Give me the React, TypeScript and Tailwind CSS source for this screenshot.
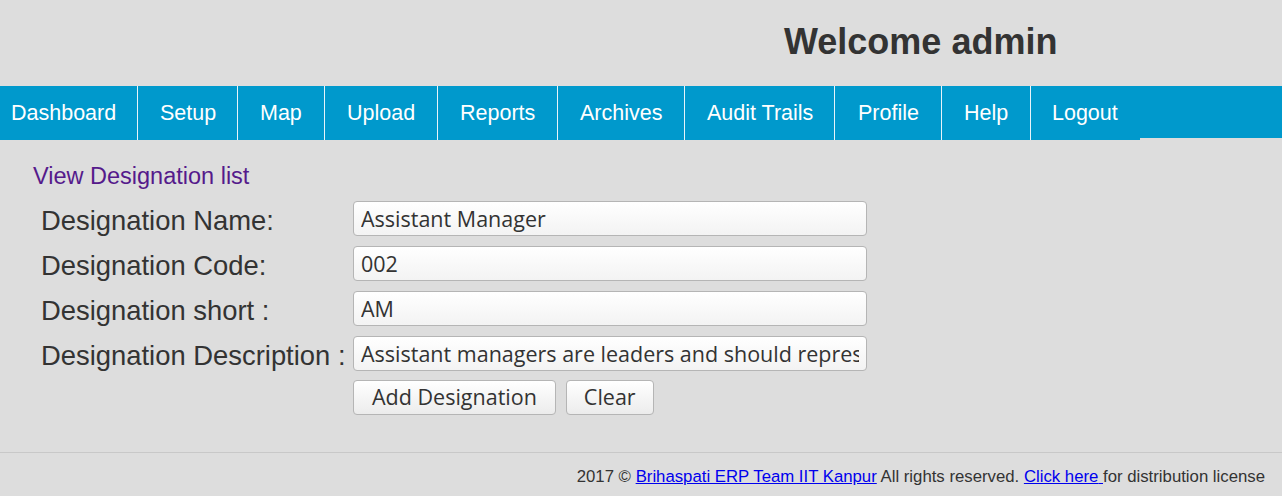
const navItems = [
  { label: "Dashboard", w: "w-[138px] pl-[11px]" },
  { label: "Setup", w: "w-[100px] pl-[22px]" },
  { label: "Map", w: "w-[87px] pl-[22px]" },
  { label: "Upload", w: "w-[113px] pl-[22px]" },
  { label: "Reports", w: "w-[120px] pl-[22px]" },
  { label: "Archives", w: "w-[127px] pl-[22px]" },
  { label: "Audit Trails", w: "w-[150px] pl-[22px]" },
  { label: "Profile", w: "w-[107px] pl-[23px]" },
  { label: "Help", w: "w-[89px] pl-[22px]" },
  { label: "Logout", w: "w-[109px] pl-[21px] border-r-0" },
];

const fields = [
  { label: "Designation Name:", value: "Assistant Manager" },
  { label: "Designation Code:", value: "002" },
  { label: "Designation short :", value: "AM" },
  {
    label: "Designation Description :",
    value: "Assistant managers are leaders and should represent the company",
  },
];

export default function App() {
  return (
    <div className="min-h-[496px] w-[1282px] bg-[#dddddd] font-['Liberation_Sans',Arial,sans-serif] text-[#333333] flex flex-col">
      {/* header */}
      <div className="h-[86px] flex items-center pl-[784px]">
        <h1 className="text-[36px] font-bold leading-none pb-[2px]">Welcome admin</h1>
      </div>

      {/* menu */}
      <div className="h-[52px] bg-[#0099cc] flex items-start">
        {navItems.map((item) => (
          <div
            key={item.label}
            className={`h-[54px] shrink-0 bg-[#0099cc] flex items-center text-white text-[21.5px] whitespace-nowrap border-r border-[#e8f4fa] ${item.w}`}
          >
            {item.label}
          </div>
        ))}
      </div>

      {/* content */}
      <div className="flex-1 pt-[27px] pl-[33px]">
        <a href="#" className="text-[23.5px] text-[#551a8b] leading-none block">
          View Designation list
        </a>
        <div className="mt-[12px] ml-[8px] grid grid-cols-[312px_514px] gap-y-[10px]">
          {fields.map((f) => (
            <div key={f.label} className="contents">
              <div className="text-[27.4px] h-[35px] leading-[31px] pt-[4px] whitespace-nowrap">{f.label}</div>
              <input
                readOnly
                value={f.value}
                className="h-[35px] w-[514px] rounded-[4px] border border-[#b5b5b5] bg-gradient-to-b from-white to-[#f3f3f3] px-[7px] text-[21.5px] text-[#333333] font-['Open_Sans','Noto_Sans',sans-serif] outline-none"
              />
            </div>
          ))}
          <div />
          <div className="flex gap-[10px] -mt-[1px]">
            <button className="h-[35px] px-[18px] rounded-[4px] border border-[#b5b5b5] bg-gradient-to-b from-white to-[#ececec] text-[21.5px] text-[#333333] font-['Open_Sans','Noto_Sans',sans-serif]">
              Add Designation
            </button>
            <button className="h-[35px] px-[17px] rounded-[4px] border border-[#b5b5b5] bg-gradient-to-b from-white to-[#ececec] text-[21.5px] text-[#333333] font-['Open_Sans','Noto_Sans',sans-serif]">
              Clear
            </button>
          </div>
        </div>
      </div>

      {/* footer */}
      <div className="h-[44px] border-t border-[#c8c8c8] flex items-center justify-end pr-[17px] pt-[4px] text-[16.75px]">
        <span>
          2017 ©{" "}
          <a href="#" className="text-[#0000ee] underline">
            Brihaspati ERP Team IIT Kanpur
          </a>{" "}
          All rights reserved.{" "}
          <a href="#" className="text-[#0000ee] underline">
            Click here{" "}
          </a>
          for distribution license
        </span>
      </div>
    </div>
  );
}
